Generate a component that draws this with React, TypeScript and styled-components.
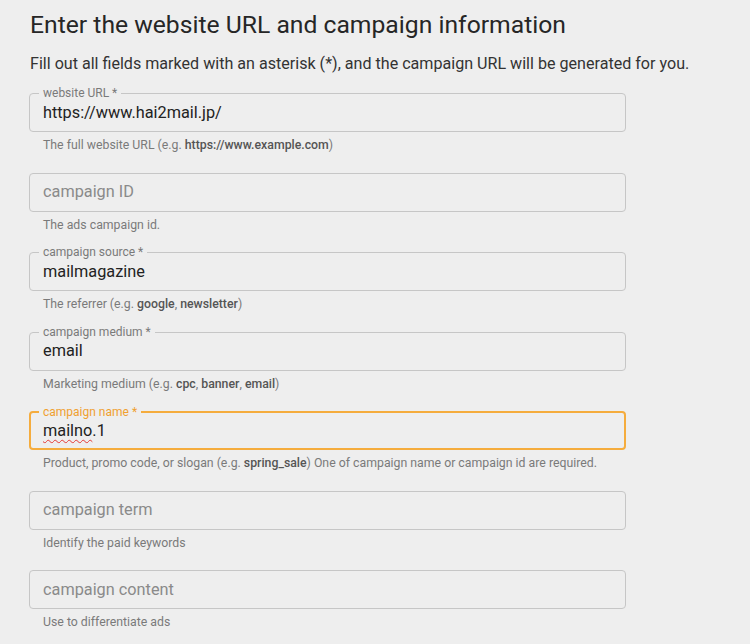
import React from "react";
import styled, { createGlobalStyle } from "styled-components";

const GlobalStyle = createGlobalStyle`
  html, body {
    margin: 0;
    padding: 0;
    background: #eeeeee;
    font-family: Roboto, "Noto Sans", Arial, sans-serif;
  }
`;

const Page = styled.div`
  width: 750px;
  height: 644px;
  overflow: hidden;
  padding: 10px 0 0 30px;
  box-sizing: border-box;
`;

const Title = styled.h1`
  margin: 0;
  font-size: 24.7px;
  line-height: 30px;
  font-weight: 400;
  color: #262626;
`;

const Intro = styled.p`
  margin: 14px 0 19px;
  font-size: 16.1px;
  line-height: 20px;
  color: #333;
`;

const Fields = styled.div`
  display: flex;
  flex-direction: column;
  gap: 20.5px;
  width: 597px;
  margin-left: -1px;
`;

const Field = styled.div`
  display: flex;
  flex-direction: column;
`;

const Box = styled.div<{ $focused?: boolean }>`
  position: relative;
  height: 39px;
  box-sizing: border-box;
  padding: 0 0 0 ${(p) => (p.$focused ? 12 : 13)}px;
  border: ${(p) => (p.$focused ? "2px solid #f5ac3d" : "1px solid #c6c6c6")};
  border-radius: 4px;
  display: flex;
  align-items: center;
`;

const FloatLabel = styled.span<{ $focused?: boolean }>`
  position: absolute;
  top: -8px;
  left: ${(p) => (p.$focused ? 8 : 9)}px;
  padding: 0 4px;
  background: #eeeeee;
  font-size: 12px;
  line-height: 14px;
  color: ${(p) => (p.$focused ? "#f0a030" : "#7a7a7a")};
`;

const Value = styled.div<{ $placeholder?: boolean }>`
  font-size: 16.3px;
  line-height: 20px;
  color: ${(p) => (p.$placeholder ? "#8a8a8a" : "#222")};
`;

const Squiggle = styled.span`
  text-decoration: underline wavy #e53935;
  text-decoration-thickness: 1px;
  text-underline-offset: 3px;
`;

const Helper = styled.div`
  margin: 6px 0 0 14px;
  height: 14px;
  font-size: 12.3px;
  line-height: 14px;
  color: #7a7a7a;
  b {
    color: #555;
    font-weight: 500;
  }
`;

type FieldDef = {
  label: string;
  required?: boolean;
  value?: React.ReactNode;
  focused?: boolean;
  helper: React.ReactNode;
};

const fields: FieldDef[] = [
  {
    label: "website URL",
    required: true,
    value: "https://www.hai2mail.jp/",
    helper: (
      <>
        The full website URL (e.g. <b>https://www.example.com</b>)
      </>
    ),
  },
  { label: "campaign ID", helper: "The ads campaign id." },
  {
    label: "campaign source",
    required: true,
    value: "mailmagazine",
    helper: (
      <>
        The referrer (e.g. <b>google</b>, <b>newsletter</b>)
      </>
    ),
  },
  {
    label: "campaign medium",
    required: true,
    value: "email",
    helper: (
      <>
        Marketing medium (e.g. <b>cpc</b>, <b>banner</b>, <b>email</b>)
      </>
    ),
  },
  {
    label: "campaign name",
    required: true,
    focused: true,
    value: (
      <>
        <Squiggle>mailno</Squiggle>.1
      </>
    ),
    helper: (
      <>
        Product, promo code, or slogan (e.g. <b>spring_sale</b>) One of campaign
        name or campaign id are required.
      </>
    ),
  },
  { label: "campaign term", helper: "Identify the paid keywords" },
  { label: "campaign content", helper: "Use to differentiate ads" },
];

export default function App() {
  return (
    <Page>
      <GlobalStyle />
      <Title>Enter the website URL and campaign information</Title>
      <Intro>
        Fill out all fields marked with an asterisk (*), and the campaign URL
        will be generated for you.
      </Intro>
      <Fields>
        {fields.map((f) => (
          <Field key={f.label}>
            <Box $focused={f.focused}>
              {f.value !== undefined ? (
                <>
                  <FloatLabel $focused={f.focused}>
                    {f.label}
                    {f.required ? " *" : ""}
                  </FloatLabel>
                  <Value>{f.value}</Value>
                </>
              ) : (
                <Value $placeholder>{f.label}</Value>
              )}
            </Box>
            <Helper>{f.helper}</Helper>
          </Field>
        ))}
      </Fields>
    </Page>
  );
}
